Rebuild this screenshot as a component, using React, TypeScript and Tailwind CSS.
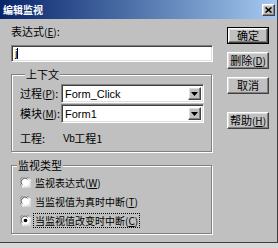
import React from "react";

const raised =
  "border border-t-white border-l-white border-r-[#404040] border-b-[#404040] shadow-[inset_-1px_-1px_0_#808080,inset_1px_1px_0_#dfdfdf]";
const sunken =
  "border border-t-[#808080] border-l-[#808080] border-r-white border-b-white shadow-[inset_1px_1px_0_#404040,inset_-1px_-1px_0_#dfdfdf]";

function Key({ k }: { k: string }) {
  return (
    <span className="text-[10px]">
      (<span className="underline">{k}</span>)
    </span>
  );
}

function Button({ label, k, primary }: { label: string; k?: string; primary?: boolean }) {
  const inner = (
    <div className={`flex h-full w-full items-center justify-center bg-[#c0c0c0] text-[11px] leading-none text-black ${raised}`}>
      {label}
      {k ? <Key k={k} /> : null}
    </div>
  );
  if (primary) {
    return <div className="h-[17px] w-[42px] border border-black">{inner}</div>;
  }
  return <div className="h-[17px] w-[42px]">{inner}</div>;
}

function Combo({ value }: { value: string }) {
  return (
    <div className={`flex h-[19px] w-[143px] bg-white p-[2px] ${sunken}`}>
      <div className="flex-1 pl-[1px] font-['Liberation_Sans'] text-[11px] leading-[15px] text-black">
        {value}
      </div>
      <div className={`flex w-[13px] items-center justify-center bg-[#c0c0c0] ${raised}`}>
        <svg width="7" height="4" viewBox="0 0 7 4">
          <polygon points="0,0 7,0 3.5,4" fill="#000" />
        </svg>
      </div>
    </div>
  );
}

function Radio({ label, k, checked }: { label: string; k: string; checked?: boolean }) {
  return (
    <div className="flex h-[19px] items-center gap-[2px] pl-[8px]">
      <svg width="11" height="11" viewBox="0 0 12 12">
        <circle cx="6" cy="6" r="5.5" fill="#fff" />
        <path d="M1.2 9.5 A5.5 5.5 0 0 1 9.5 1.2" stroke="#808080" fill="none" />
        <path d="M2.5 8.5 A4.2 4.2 0 0 1 8.5 2.5" stroke="#404040" fill="none" />
        <path d="M10.8 2.5 A5.5 5.5 0 0 1 2.5 10.8" stroke="#fff" fill="none" />
        <path d="M9.5 3.5 A4.2 4.2 0 0 1 3.5 9.5" stroke="#dfdfdf" fill="none" />
        {checked ? <circle cx="6" cy="6" r="2" fill="#000" /> : null}
      </svg>
      <span
        className={`px-[1px] text-[10px] leading-[13px] text-black ${
          checked ? "border border-dotted border-black" : "border border-transparent"
        }`}
      >
        {label}
        <Key k={k} />
      </span>
    </div>
  );
}

export default function App() {
  return (
    <div className="h-[248px] w-[278px] overflow-hidden bg-[#d8d8d8] font-['Noto_Sans_CJK_SC',sans-serif]">
      <div className="flex h-[243px] flex-col border-r border-b border-[#404040] bg-[#c0c0c0]">
        <div className="flex h-[19px] items-center justify-between bg-gradient-to-r from-[#0a246a] to-[#a6caf0] pl-[3px] pr-[2px]">
          <span className="text-[10px] font-bold leading-none text-white">编辑监视</span>
          <div className={`flex h-[12px] w-[13px] items-center justify-center bg-[#c0c0c0] ${raised}`}>
            <svg width="7" height="6" viewBox="0 0 7 6">
              <path d="M0.5 0.5 L6.5 5.5 M6.5 0.5 L0.5 5.5" stroke="#000" strokeWidth="1.6" />
            </svg>
          </div>
        </div>

        <div className="flex flex-1">
          <div className="w-[213px] pl-[11px] pt-[5px]">
            <div className="text-[11px] leading-[14px] text-black">
              表达式<Key k="E" />:
            </div>
            <div className={`mt-[6px] flex h-[17px] w-[202px] items-center bg-white pl-[3px] ${sunken}`}>
              <span className="font-['Liberation_Sans'] text-[11px] leading-none text-black">j</span>
              <span className="h-[11px] w-px bg-black" />
            </div>

            <fieldset className="mt-[5px] w-[201px] border border-[#808080] pb-[6px] pl-[8px] pr-[7px] pt-[3px] shadow-[inset_1px_1px_0_#fff,1px_1px_0_#fff]">
              <legend className="ml-[5px] bg-[#c0c0c0] px-[1px] text-[11px] leading-[14px] text-black">
                上下文
              </legend>
              <div className="flex flex-col gap-[1px]">
                <div className="flex items-center justify-between">
                  <span className="text-[11px] leading-none text-black">
                    过程<Key k="P" />:
                  </span>
                  <Combo value="Form_Click" />
                </div>
                <div className="flex items-center justify-between">
                  <span className="text-[11px] leading-none text-black">
                    模块<Key k="M" />:
                  </span>
                  <Combo value="Form1" />
                </div>
              </div>
              <div className="mt-[8px] flex h-[14px] items-center text-[11px] text-black">
                <span className="w-[43px]">工程:</span>
                <span className="font-['Liberation_Sans'] text-[10px] tracking-[-0.5px]">Vb</span>
                <span>工程1</span>
              </div>
            </fieldset>

            <fieldset className="mt-[6px] w-[201px] border border-[#808080] pb-[3px] pt-[1px] shadow-[inset_1px_1px_0_#fff,1px_1px_0_#fff]">
              <legend className="ml-[5px] bg-[#c0c0c0] px-[1px] text-[11px] leading-[14px] text-black">
                监视类型
              </legend>
              <Radio label="监视表达式" k="W" />
              <Radio label="当监视值为真时中断" k="T" />
              <Radio label="当监视值改变时中断" k="C" checked />
            </fieldset>
          </div>

          <div className="flex flex-col pl-[14px] pt-[8px]">
            <Button label="确定" primary />
            <div className="mt-[8px]">
              <Button label="删除" k="D" />
            </div>
            <div className="mt-[8px]">
              <Button label="取消" />
            </div>
            <div className="mt-[18px]">
              <Button label="帮助" k="H" />
            </div>
          </div>
        </div>
      </div>
    </div>
  );
}
